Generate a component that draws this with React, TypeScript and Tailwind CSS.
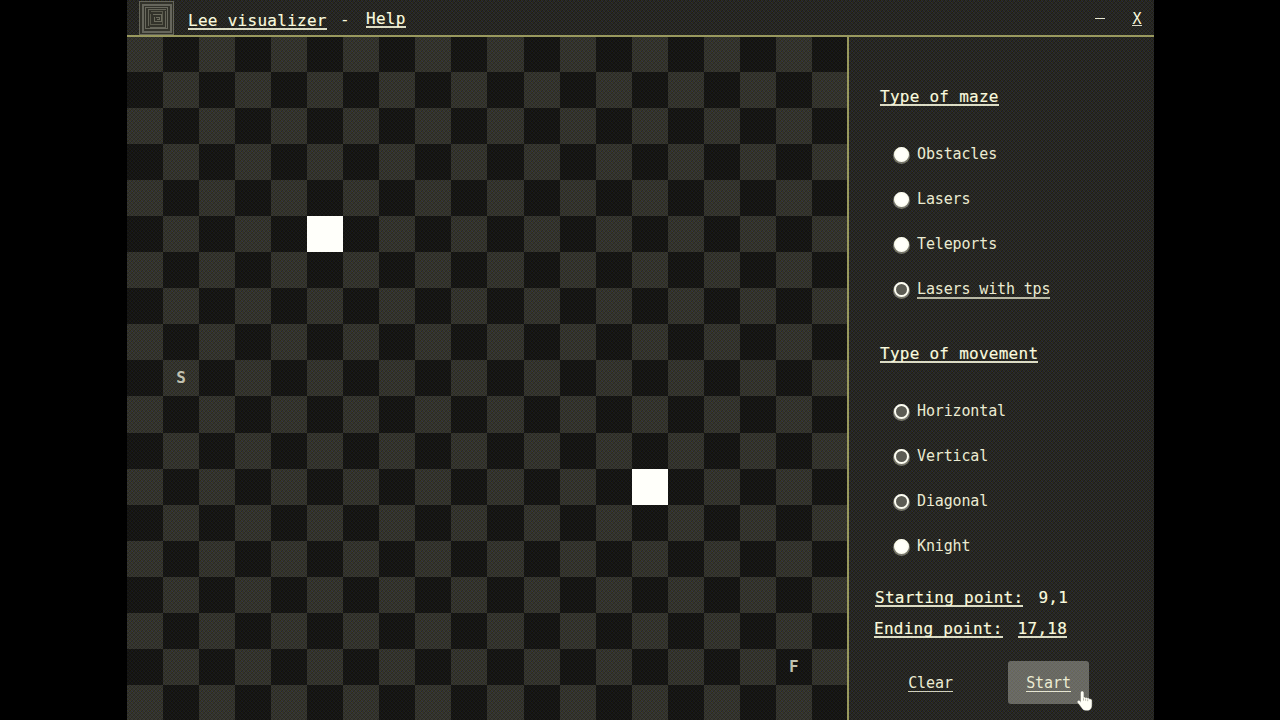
import React from "react";

const SIZE = 20;
const WALLS = ["5,5", "12,14"];
const START = "9,1";
const FINISH = "17,18";

const DITHER =
  "bg-[repeating-conic-gradient(#ffffff0a_0_25%,transparent_0_50%),repeating-conic-gradient(#262604_0_25%,#1d1d38_0_50%)] [background-size:4px_4px,2px_2px]";
const LINK = "border-b-2 border-[#dcdcc4]";

function Board() {
  const cells: React.ReactNode[] = [];
  for (let r = 0; r < SIZE; r++) {
    for (let c = 0; c < SIZE; c++) {
      const key = `${r},${c}`;
      const fill = WALLS.includes(key) ? "bg-[#fffffa]" : (r + c) % 2 === 0 ? "bg-[#ffffc8]/6" : "bg-black/42";
      cells.push(
        <div key={key} className={`flex items-center justify-center text-[16px] leading-none font-bold text-[#c2c2b0] ${fill}`}>
          {key === START ? "S" : key === FINISH ? "F" : null}
        </div>
      );
    }
  }
  return (
    <div className="-mt-px h-[684px] w-[720px] shrink-0 overflow-hidden">
      <div className="grid h-[721px] w-[721px] grid-cols-[repeat(20,36.05px)] grid-rows-[repeat(20,36.05px)]">{cells}</div>
    </div>
  );
}

function Option({ label, on = false, underlined = false }: { label: string; on?: boolean; underlined?: boolean }) {
  return (
    <div className="flex h-[45px] items-center">
      <span
        className={`mr-[8px] h-[15px] w-[15px] shrink-0 rounded-full border-2 border-[#fdfdf2] shadow-[0_1px_0_1px_#77776c] ${on ? "bg-[#5c5c54]" : "bg-[#fffffa]"}`}
      />
      <span
        className={`h-[19px] text-[15px] leading-[18px] tracking-[-0.14px] text-[#ebebd2] ${underlined ? "border-b-2 border-[#b8b8a4]" : ""}`}
      >
        {label}
      </span>
    </div>
  );
}

function Title({ children }: { children: React.ReactNode }) {
  return (
    <h2
      className={`h-[20px] w-fit text-[16px] leading-[22px] tracking-[0.26px] text-[#fafade] [-webkit-text-stroke:0.15px] ${LINK}`}
    >
      {children}
    </h2>
  );
}

function MazeLogo() {
  return (
    <svg width="36" height="35" viewBox="0 0 36 35" fill="none" shapeRendering="crispEdges">
      <rect x="0.5" y="1.5" width="34" height="33" fill="#32322a" stroke="#66665a" />
      <rect x="3.5" y="4.5" width="28" height="27" stroke="#66665c" strokeWidth="2" />
      <rect x="6.5" y="7.5" width="22" height="21" stroke="#69695e" />
      <path d="M9 26V9h18M11 27h15V11" stroke="#66665a" />
      <path d="M11.500 11.500h12v13h-12v-11" stroke="#5c5c4e" />
      <path d="M14 14h8v7h-7v-4M17 17h3v2h-2" stroke="#6c6c5e" />
    </svg>
  );
}

function HandCursor() {
  return (
    <svg width="16" height="20" viewBox="0 0 16 20" className="absolute top-[691px] left-[1077px]">
      <path
        d="M4 1.500c0-1.300 2.400-1.300 2.400 0v5.400c.4-.6 1.900-.5 2.100.4.500-.6 1.900-.5 2.100.4.600-.5 1.900-.3 2.100.7.700-.4 2 0 2 1.200v4.700c0 2.600-1.400 4.900-3.400 4.900H8.500c-1.500 0-2.700-1-3.500-2.300L.9 11.600C.2 10.200 1.600 9.200 2.600 10L4 11.500Z"
        fill="#fffff6"
        stroke="#fffff6"
        strokeWidth="0.5"
      />
      <path d="M6.500 7.200v2.400M8.600 7.700v2.100M10.700 8.300v1.900" stroke="#8a8a7c" strokeWidth="0.6" />
    </svg>
  );
}

export default function App() {
  return (
    <div className="relative flex h-[720px] w-[1280px] justify-center overflow-hidden bg-black font-['DejaVu_Sans_Mono',monospace]">
      <div className={`ml-px flex h-full w-[1027px] flex-col overflow-hidden ${DITHER}`}>
        <header className="z-10 flex h-[37px] shrink-0 items-start border-b-2 border-[#98985e] text-[16px] text-[#fafade]">
          <div className="ml-[12px] w-[36px]">
            <MazeLogo />
          </div>
          <span
            className={`mt-[10px] ml-[13px] h-[20px] w-[139px] leading-[22px] tracking-[0.28px] whitespace-nowrap [-webkit-text-stroke:0.15px] ${LINK}`}
          >
            Lee visualizer
          </span>
          <span className="mt-[10px] ml-[13px] w-[10px] leading-[20px]">-</span>
          <span className={`mt-[8px] ml-[16px] h-[20px] w-[40px] leading-[22px] tracking-[0.28px] [-webkit-text-stroke:0.15px] ${LINK}`}>
            Help
          </span>
          <span className="mt-[18px] ml-auto h-px w-[10px] bg-[#e6e6d0]" />
          <span className="mt-[9px] mr-[12px] ml-[27px] h-[17px] w-[10px] border-b border-[#dadac8] text-center text-[15px] leading-[20px]">
            X
          </span>
        </header>
        <div className="flex min-h-0 flex-1 items-start">
          <Board />
          <aside className="h-[683px] flex-1 border-l-2 border-[#98985e]">
            <div className="pt-[49px] pl-[31px]">
              <Title>Type of maze</Title>
            </div>
            <div className="mt-[26px] ml-[45px]">
              <Option label="Obstacles" />
              <Option label="Lasers" />
              <Option label="Teleports" />
              <Option label="Lasers with tps" on underlined />
            </div>
            <div className="mt-[31px] pl-[31px]">
              <Title>Type of movement</Title>
            </div>
            <div className="mt-[26px] ml-[45px]">
              <Option label="Horizontal" on />
              <Option label="Vertical" on />
              <Option label="Diagonal" on />
              <Option label="Knight" />
            </div>
            <div className="mt-[18px] ml-[26px] flex h-[20px] gap-[15px]">
              <Title>Starting point:</Title>
              <span className="text-[16px] leading-[22px] tracking-[0.26px] text-[#fafade] [-webkit-text-stroke:0.15px]">9,1</span>
            </div>
            <div className="mt-[11px] ml-[25px] flex h-[20px] gap-[15px]">
              <Title>Ending point:</Title>
              <Title>17,18</Title>
            </div>
            <div className="mt-[23px] flex text-[15px] leading-[18px] tracking-[-0.1px] text-[#ebebd2]">
              <button className="ml-[59px] flex h-[44px] w-[45px] items-center justify-center">
                <span className="h-[18px] border-b border-[#d0d0bc]">Clear</span>
              </button>
              <button className="ml-[55px] flex h-[43px] w-[81px] items-center justify-center rounded-[3px] bg-[#d8d8cc]/38">
                <span className="h-[18px] border-b border-[#e6e6d2]">Start</span>
              </button>
            </div>
          </aside>
        </div>
      </div>
      <HandCursor />
    </div>
  );
}
